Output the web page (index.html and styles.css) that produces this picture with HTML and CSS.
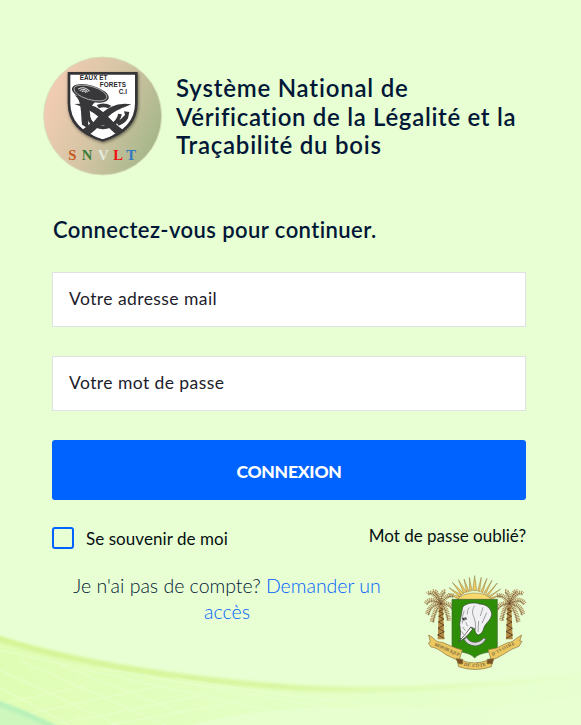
FILE: index.html
```html
<!DOCTYPE html>
<html lang="fr">
<head>
<meta charset="utf-8">
<title>SNVLT - Connexion</title>
<link rel="stylesheet" href="styles.css">
</head>
<body>
<svg class="backdrop" viewBox="0 0 581 725" aria-hidden="true">
  <defs>
    <linearGradient id="hill" x1="0" y1="0" x2="1" y2="0">
      <stop offset="0" stop-color="#e0fdb5"/><stop offset=".5" stop-color="#e4ffc5"/><stop offset="1" stop-color="#e7ffd0"/>
    </linearGradient>
    <linearGradient id="edge" x1="0" y1="0" x2="1" y2="0">
      <stop offset="0" stop-color="#d5f495"/><stop offset=".5" stop-color="#d9f7a2"/><stop offset="1" stop-color="#e4ffc5" stop-opacity=".2"/>
    </linearGradient>
    <filter id="soft" x="-5%" y="-30%" width="110%" height="160%"><feGaussianBlur stdDeviation="1.6"/></filter>
  </defs>
  <path fill="url(#hill)" d="M0 636C70 661 180 679 300 687C400 693 490 684 581 675V725H0Z"/>
  <path fill="none" stroke="url(#edge)" stroke-width="6" filter="url(#soft)" d="M-10 636C70 662 180 680 300 688C400 693 490 684 591 675"/>
  <g fill="none" stroke="#edffd9" stroke-width="1.2" opacity=".5">
    <path d="M0 688L70 725M0 670L118 725M20 660L165 725M60 665L190 716M0 704L84 686M18 716L160 686M50 725L205 695M110 725L240 701"/>
    <path d="M100 668Q260 695 430 725M0 650Q170 690 340 725M175 678Q300 700 450 712"/>
  </g>
  <path d="M190 725Q280 700 420 711Q490 710 581 696V725Z" fill="#e8ffd3" opacity=".65"/>
  <path d="M0 701Q28 712 54 725H0Z" fill="#cdf7bd"/>
  <path d="M-5 702Q28 714 56 728" fill="none" stroke="#b8f1b9" stroke-width="5" filter="url(#soft)"/>
</svg>

<main class="login">
  <header class="brand">
    <svg class="brand-logo" viewBox="0 0 396 396" role="img" aria-label="Eaux et Forêts C.I">
      <defs>
        <linearGradient id="disc" x1="0" y1=".25" x2="1" y2=".7">
          <stop offset="0" stop-color="#f6cdb4"/><stop offset=".5" stop-color="#d5c5a5"/><stop offset="1" stop-color="#a3b688"/>
        </linearGradient>
        <filter id="shade"><feDropShadow dx="2" dy="4" stdDeviation="4" flood-opacity=".5"/></filter>
        <clipPath id="crest"><path d="M101 71H299V160C299 215 260 250 200 268C140 250 101 215 101 160Z"/></clipPath>
      </defs>
      <circle cx="200" cy="198" r="177" fill="url(#disc)" stroke="#d7dfbb" stroke-width="3"/>
      <path filter="url(#shade)" fill="#fff" stroke="#343437" stroke-width="8" d="M99 70H301V160C301 217 260 253 200 271C140 253 99 217 99 160Z"/>
      <g clip-path="url(#crest)" fill="#38383b">
        <path d="M116 136C138 150 134 190 138 224L158 236Q155 218 158 204C158 184 164 165 184 150Z"/>
        <path d="M115 162Q150 158 178 170C206 184 228 217 262 240L246 258C218 236 200 209 174 190C153 176 135 168 115 162Z"/>
        <path d="M286 163Q252 158 226 170C196 184 172 217 138 240L156 258C186 236 203 209 229 190C249 176 267 172 286 163Z"/>
        <path d="M156 184C156 216 174 231 201 232C229 231 248 214 252 192" fill="none" stroke="#38383b" stroke-width="11"/>
        <path d="M182 165Q203 155 226 167L217 175Q202 169 189 175Z"/>
        <path d="M167 196L187 199L172 217Q164 209 163 198ZM220 199L239 196Q240 206 232 216Z" fill="#fff"/>
        <path d="M180 228L201 209L222 228L201 225Z" fill="#38383b"/>
        <path d="M168 254L186 247L200 252L215 247L233 254L216 264L200 269L184 264Z" fill="#fff"/>
      </g>
      <path d="M264 184L280 186L276 205Q267 221 248 227L240 216Q256 209 267 195Z" fill="#38383b"/>
      <g transform="rotate(16 163 130)">
        <ellipse cx="163" cy="130" rx="57" ry="24" fill="#38383b"/>
        <ellipse cx="163" cy="129" rx="51" ry="20" fill="none" stroke="#d8d8d8" stroke-width="2"/>
        <path d="M124 128Q140 112 159 125M130 131Q143 118 154 129M137 133Q143 125 150 132" fill="none" stroke="#ddd" stroke-width="3"/>
      </g>
      <g class="crest-text"><text x="131" y="90" textLength="83">EAUX ET</text><text x="191" y="111" textLength="79">FORETS</text><text x="248" y="132" textLength="25">C.I</text></g>
      <g class="crest-initials">
        <text x="97" y="329" fill="#c55a1c">S</text><text x="137" y="329" fill="#3c7d3a">N</text><text x="186" y="329" fill="#e4ede0">V</text><text x="232" y="329" fill="#f20d12">L</text><text x="271" y="329" fill="#2f78c4">T</text>
      </g>
    </svg>
    <h1 class="brand-title"><span class="t1">Système National de</span><br><span class="t2">Vérification de la Légalité et la</span><br><span class="t3">Traçabilité du bois</span></h1>
  </header>

  <h2 class="prompt">Connectez-vous pour continuer.</h2>

  <form class="form">
    <input class="field mail" type="text" placeholder="Votre adresse mail">
    <input class="field pass" type="password" placeholder="Votre mot de passe">
    <button class="submit" type="button">CONNEXION</button>
    <div class="options">
      <label class="remember"><span class="box"></span><span class="remember-text">Se souvenir de moi</span></label>
      <a class="forgot">Mot de passe oublié?</a>
    </div>
  </form>

  <footer class="foot">
    <p class="signup"><span class="s1">Je n'ai pas de compte? </span><a class="link">Demander un<br>accès</a></p>
    <svg class="arms" viewBox="0 0 360 330" role="img" aria-label="République de Côte d'Ivoire">
      <defs>
        <g id="palm">
          <path d="M69 120H81L85 220H65Z" fill="#b58b43"/>
          <path d="M70 124L82 130L68 136L83 143L68 151L84 159L67 168L84 177L66 187L85 197L65 207L85 217" fill="none" stroke="#4f3b22" stroke-width="2.5"/>
          <g fill="none" stroke="#b39762" stroke-width="14" stroke-dasharray="3 2">
            <path d="M75 114Q50 70 35 84M75 114Q62 72 52 76M75 114Q75 76 88 76M75 114Q92 82 112 90M75 114Q44 91 29 113M75 114Q43 110 34 145M75 114Q57 125 48 168M75 114Q91 121 99 164M75 114Q98 107 115 130"/>
          </g>
          <g fill="none" stroke="#62482a" stroke-width="2.5" stroke-dasharray="5 2">
            <path d="M75 114Q50 72 35 86M75 114Q62 76 52 78M75 114Q75 80 88 80M75 114Q92 85 112 93M75 114Q44 94 31 117M75 114Q43 114 37 149M75 114Q59 129 51 169M75 114Q89 124 96 164M75 114Q97 110 112 134"/>
          </g>
        </g>
      </defs>
      <g fill="#efcb60" stroke="#8a7443" stroke-width="1.5">
        <path d="M126 99L97 83L132 92ZM130 92L99 65L137 87ZM136 87L109 49L143 82ZM143 82L127 41L151 78ZM152 79L144 39L159 76ZM161 76L160 34L168 74ZM170 74L176 29L182 74ZM185 75L196 34L191 77ZM194 78L213 37L200 80ZM203 82L228 43L209 85ZM211 87L244 51L215 91ZM216 92L254 69L219 96ZM221 96L255 86L224 101Z"/>
        <path d="M123 102Q139 81 176 81Q211 81 228 102Z" fill="#f8d96e"/>
      </g>
      <use href="#palm"/><use href="#palm" transform="matrix(-1 0 0 1 355 0)"/>
      <path d="M108 100H244V240C244 254 230 250 215 259Q185 264 176 276Q167 264 141 259C122 251 108 254 108 240Z" fill="#2f8e08" stroke="#47633a" stroke-width="2"/>
      <path d="M152 214Q160 230 180 229Q194 227 203 216L210 219Q199 238 178 240Q153 238 144 220Z" fill="#d9d9dc" stroke="#4c514c" stroke-width="2"/>
      <path d="M140 123C152 110 176 108 190 114C212 114 228 130 227 147C224 163 211 169 204 184Q200 203 187 207Q178 204 176 188L164 183Q156 194 152 210L143 219L132 217L134 199L131 175L135 151Z" fill="#f1f1f3" stroke="#3a443d" stroke-width="2"/>
      <path d="M164 184Q148 207 128 227Q148 219 170 189Z" fill="#fff" stroke="#29312b" stroke-width="2"/>
      <path d="M176 119Q164 137 174 154Q180 168 179 191M201 124L193 150M212 140L198 172M188 165L186 198M145 134Q137 148 139 172M149 168L155 181M140 183L148 194M137 196L144 207M160 124Q152 132 154 145" fill="none" stroke="#8e8f95" stroke-width="2.5"/>
      <path d="M138 157L150 154L153 160L143 164Z" fill="#333"/><circle cx="147" cy="159" r="2" fill="#ddd"/>
      <g fill="#ecc960" stroke="#88703b" stroke-width="2">
        <path d="M38 207L51 215Q60 229 79 229Q103 240 120 246L139 252L129 284Q111 277 90 266Q60 243 45 243L37 231L43 227Z"/>
        <path d="M317 207L303 216Q289 230 273 231L242 246L216 251L226 283Q247 275 264 264Q288 247 309 241L318 226L311 225Z"/>
        <path d="M122 279L139 284Q175 298 215 283L231 279L226 302Q178 319 128 302Z"/>
        <path d="M120 278L140 280L140 294L128 293ZM233 278L214 280L213 293L229 293Z" fill="#795224"/>
      </g>
      <path id="ribbon-left" d="M55 239Q90 254 137 274" fill="none"/><path id="ribbon-mid" d="M143 299Q178 307 214 298" fill="none"/><path id="ribbon-right" d="M230 270Q264 249 304 233" fill="none"/>
      <g class="motto"><text><textPath href="#ribbon-left" textLength="82">RÉPUBLIQUE</textPath></text><text><textPath href="#ribbon-mid" textLength="68">DE CÔTE</textPath></text><text><textPath href="#ribbon-right" textLength="76">D'IVOIRE</textPath></text></g>
    </svg>
  </footer>
</main>
</body>
</html>
```
FILE: styles.css
```css
* { box-sizing: border-box; }
body { margin: 0; min-height: 725px; background: #e8ffd3; color: #001737; font-family: Lato, "Open Sans", sans-serif; font-variant-ligatures: none; overflow: hidden; }
.backdrop { position: absolute; inset: 0; width: 581px; height: 725px; z-index: -1; }
.login { padding: 50px 55px 0 52px; }
.brand { display: flex; margin-left: -16px; height: 132px; }
.brand-logo { width: 132px; height: 132px; flex: none; }
.brand-title { margin: 24px 0 0 8px; font-size: 24px; line-height: 28.5px; font-weight: 600; white-space: nowrap; }
.t1 { letter-spacing: .8px; }
.t2 { letter-spacing: .69px; }
.t3 { letter-spacing: .75px; }
.crest-text { font: bold 19px "Liberation Sans", sans-serif; fill: #252528; }
.crest-initials { font: bold 44px "Liberation Serif", serif; }
.prompt { margin: 33px 0 0 1px; font-size: 22px; line-height: 30px; font-weight: 600; letter-spacing: .43px; white-space: nowrap; }
.form { margin-top: 27px; display: flex; flex-direction: column; }
.field { width: 100%; height: 55px; margin: 0 0 29px; padding: 0 16px 2px; border: 1px solid #dee2e6; border-radius: 0; background: #fff; font: 400 17.5px Lato, sans-serif; letter-spacing: .43px; color: #212529; }
.field::placeholder { color: #1c1c2c; opacity: 1; }
.submit { height: 60px; border: 0; border-radius: 3px; background: #0062ff; color: #fff; font: 900 17.5px Lato, sans-serif; letter-spacing: -.25px; padding: 3px 0 0; }
.options { display: flex; justify-content: space-between; height: 70px; color: #050f12; font-size: 17px; white-space: nowrap; }
.remember { display: flex; padding-top: 27px; line-height: 24px; letter-spacing: .06px; }
.box { width: 22px; height: 22px; margin-right: 12px; border: 2px solid #0062ff; border-radius: 3px; }
.forgot { padding-top: 24px; line-height: 24px; }
.foot { display: flex; }
.signup { flex: none; margin: 3px 0 0; width: 350px; text-align: center; font-size: 19.5px; font-weight: 300; line-height: 26px; white-space: nowrap; }
.link { color: #0062ff; }
.arms { width: 120px; height: 110px; margin: -4px 0 0 14px; flex: none; }
.motto { font: bold 14px "Liberation Serif", serif; fill: #806a40; }
```
